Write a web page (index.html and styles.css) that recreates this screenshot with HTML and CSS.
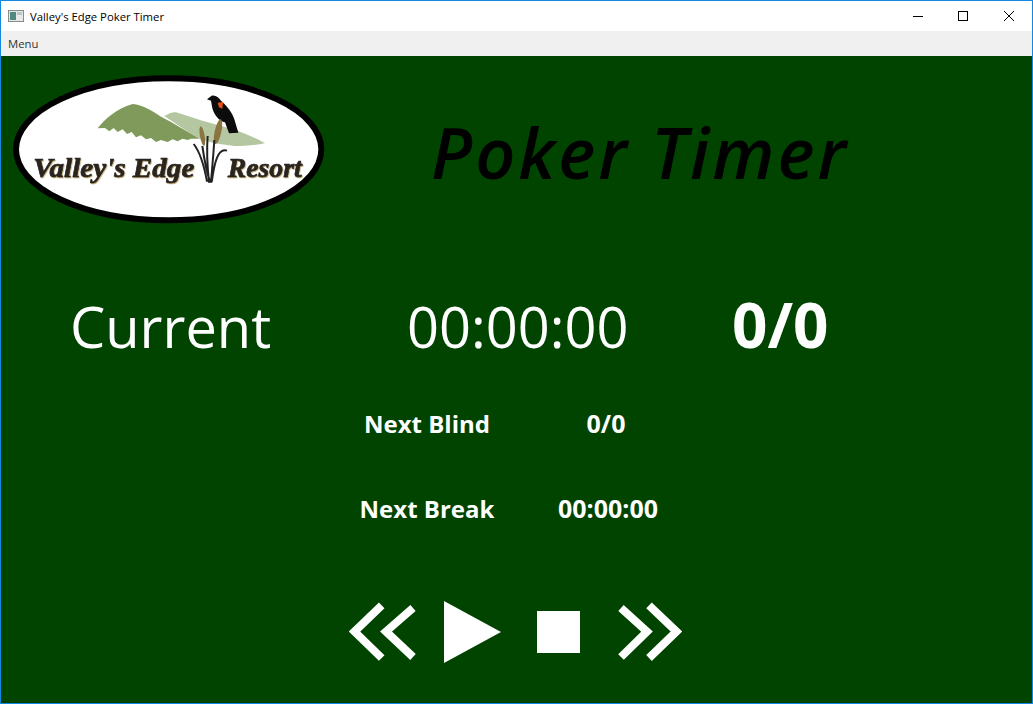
FILE: index.html
```html
<!DOCTYPE html>
<html lang="en">
<head>
    <meta charset="UTF-8">
    <title>Valley's Edge Poker Timer</title>
    <link rel="stylesheet" href="styles.css">
</head>
<body>
    <div class="window">
        <div class="title-bar">
            <svg class="app-icon" width="16" height="16" viewBox="0 0 16 16">
                <rect x="0.5" y="2.5" width="15" height="11" fill="#e8e8e8" stroke="#8a8a8a"/>
                <rect x="2" y="4" width="6" height="8" fill="#4f8a80"/>
                <rect x="9" y="4" width="5" height="3" fill="#b8c8c8"/>
            </svg>
            <span class="title-text">Valley's Edge Poker Timer</span>
            <div class="win-controls">
                <svg class="win-btn" width="46" height="31" viewBox="0 0 46 31"><path d="M19 15.5H29" stroke="#000"/></svg>
                <svg class="win-btn" width="46" height="31" viewBox="0 0 46 31"><rect x="18.5" y="10.5" width="9" height="9" fill="none" stroke="#000"/></svg>
                <svg class="win-btn" width="46" height="31" viewBox="0 0 46 31"><path d="M18 10L28 20M28 10L18 20" stroke="#000"/></svg>
            </div>
        </div>
        <div class="menu-bar">Menu</div>

        <main class="timer">
            <header class="top-row">
                <svg class="logo" width="340" height="175" viewBox="0 0 1020 525">
                    <ellipse cx="503" cy="268" rx="458" ry="213" fill="#fff" stroke="#000" stroke-width="18"/>
                    <path d="M490 168C505 160 515 155 525 157C560 168 610 185 650 195C700 208 750 225 792 250C760 256 730 258 700 258L640 250L590 235L530 195Z" fill="#b5c7a0"/>
                    <path d="M290 205C310 180 345 145 395 132C425 135 450 150 480 170C520 190 560 215 594 236L570 236L560 240L545 236L530 244L515 238L500 246L480 240L465 246L450 234L435 238L420 226L405 232L392 216L378 222L365 208L350 216L338 204L325 214L312 204Z" fill="#7f9a5a"/>
                    <path d="M618 118L632 107C645 105 652 112 660 122C680 140 695 160 700 178L712 218L684 220L672 187C655 185 640 165 634 145L630 122Z" fill="#0c0c0c"/>
                    <path d="M650 128L666 126L664 146L654 142Z" fill="#e8540f"/>
                    <ellipse cx="604" cy="228" rx="7" ry="30" fill="#8a7440" transform="rotate(-10 604 228)"/>
                    <ellipse cx="651" cy="215" rx="10" ry="38" fill="#8a7440" transform="rotate(12 651 215)"/>
                    <path d="M578 252C600 280 610 320 618 365M620 228C616 280 620 330 624 368M604 258C610 300 618 340 628 368M640 240C636 300 632 340 630 368M678 272C650 262 640 310 632 366" fill="none" stroke="#222" stroke-width="6"/>
                    <text class="logo-text" x="97" y="350" textLength="483" lengthAdjust="spacingAndGlyphs">Valley's Edge</text>
                    <text class="logo-text" x="680" y="350" textLength="222" lengthAdjust="spacingAndGlyphs">Resort</text>
                </svg>
                <h1 class="app-title">Poker Timer</h1>
            </header>

            <section class="current-row">
                <div class="current-label">Current</div>
                <div class="current-time">00:00:00</div>
                <div class="current-blind">0/0</div>
            </section>

            <section class="next-grid">
                <div>Next Blind</div>
                <div class="next-value">0/0</div>
                <div>Next Break</div>
                <div class="next-value">00:00:00</div>
            </section>

            <div class="controls">
                <svg class="ctl-rew" width="68" height="60" viewBox="0 0 68 60">
                    <path d="M32.7 3.3L5.5 29.5L32.7 56M64 6L37 29.5L64 55" fill="none" stroke="#fff" stroke-width="8"/>
                </svg>
                <svg class="ctl-play" width="57" height="62" viewBox="0 0 57 62">
                    <path d="M0 0L57 31L0 62Z" fill="#fff"/>
                </svg>
                <svg class="ctl-stop" width="43" height="42" viewBox="0 0 43 42">
                    <rect width="43" height="42" fill="#fff"/>
                </svg>
                <svg class="ctl-ff" width="64" height="60" viewBox="0 0 64 60">
                    <path d="M3 6L29 29.5L3 55M31 3.3L58.5 29.5L31 56" fill="none" stroke="#fff" stroke-width="8"/>
                </svg>
            </div>
        </main>
    </div>
</body>
</html>
```

FILE: styles.css
```css
html, body { margin: 0; padding: 0; height: 100%; overflow: hidden; }
body { font-family: "Open Sans", "Noto Sans", Arial, sans-serif; }
.window { box-sizing: border-box; width: 1033px; height: 704px; border: 1px solid #1088e4; display: flex; flex-direction: column; background: #fff; }

.title-bar { height: 30px; display: flex; align-items: center; padding-left: 7px; background: #fff; flex-shrink: 0; }
.app-icon { margin-right: 6px; }
.title-text { font-size: 11.3px; color: #000; }
.win-controls { margin-left: auto; display: flex; }
.win-btn { display: block; }

.menu-bar { height: 25px; line-height: 26px; padding-left: 7px; background: #f0f0f0; color: #333; font-size: 11.3px; flex-shrink: 0; }

.timer { flex: 1; background: #004400; color: #fff; display: flex; flex-direction: column; }

.top-row { display: flex; padding-top: 4px; height: 175px; }
.logo { display: block; flex-shrink: 0; }
.logo-text { font-family: "Liberation Serif", serif; font-style: italic; font-weight: bold; font-size: 84px; fill: #2a2420; stroke: #2a2420; stroke-width: 2px; filter: drop-shadow(2px 3px 0 #b9a66e); }
.app-title { margin: 0; padding: 52px 0 0 90px; font-family: "Open Sans", sans-serif; font-style: italic; font-weight: 600; font-size: 70px; line-height: 80px; letter-spacing: 3px; color: #000; white-space: nowrap; }

.current-row { display: grid; grid-template-columns: 337px 325px auto; padding: 49px 0 0 69px; font-size: 56px; line-height: 80px; align-items: baseline; }
.current-blind { font-weight: bold; font-size: 62px; }

.next-grid { display: grid; grid-template-columns: 262px 96px; grid-auto-rows: 85px; margin: 15px 0 0 295px; font-size: 24px; font-weight: bold; line-height: 85px; text-align: center; white-space: nowrap; }
.next-value { font-size: 25px; }

.controls { display: flex; align-items: center; height: 66px; margin-top: 48px; padding-left: 348px; }
.ctl-play { margin-left: 27px; }
.ctl-stop { margin-left: 36px; }
.ctl-ff { margin-left: 38px; }
```
